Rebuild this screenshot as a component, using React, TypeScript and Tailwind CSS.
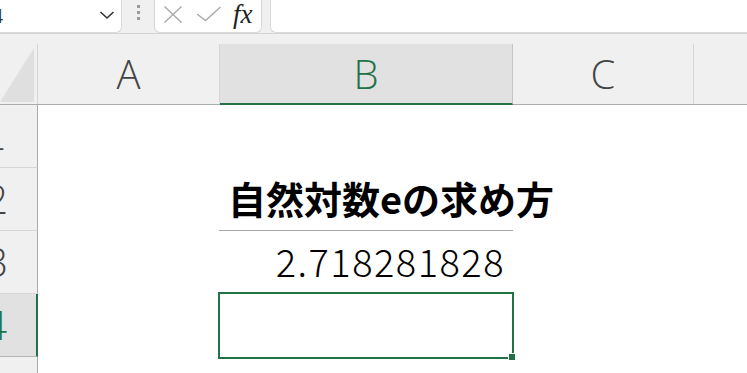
import React from "react";

const headerFont = { fontFamily: '"Open Sans", "Liberation Sans", sans-serif' };

function RowHeader({ n, active, font }: { n: number; active?: boolean; font?: React.CSSProperties }) {
  return (
    <div
      className={
        "h-[63px] w-[38px] shrink-0 flex items-center justify-end overflow-hidden border-b pr-[29px] " +
        (active
          ? "bg-[#e1e1e1] border-r-2 border-r-[#217346] border-b-[#b5b5b5] text-[#217346]"
          : "bg-[#f0f0f0] border-r border-r-[#ababab] border-b-[#d6d6d6] text-[#444]")
      }
    >
      <span className="text-[40px] font-light leading-none whitespace-nowrap" style={font ?? headerFont}>
        {n}
      </span>
    </div>
  );
}

export default function App() {
  return (
    <div
      className="w-[747px] h-[373px] overflow-hidden bg-white flex flex-col"
      style={{ fontFamily: '"Noto Sans CJK JP", "Noto Sans", sans-serif' }}
    >
      {/* Formula bar */}
      <div className="h-[33px] shrink-0 bg-[#f0f0f0] flex">
        <div className="w-[122px] shrink-0 bg-white rounded-br-[6px] border-r border-b border-[#d9d9d9] flex items-center justify-between overflow-hidden">
          <span
            className="-ml-[21px] text-[20px] text-[#333] leading-none"
            style={{ fontFamily: '"Liberation Sans", Arial, sans-serif' }}
          >
            B4
          </span>
          <svg width="16" height="10" viewBox="0 0 16 10" className="mr-[6px] mb-[3px]">
            <polyline points="1.5,2 8,8 14.5,2" fill="none" stroke="#333" strokeWidth="1.6" />
          </svg>
        </div>
        <div className="w-[32px] shrink-0 flex flex-col items-center gap-[3px] pt-[5px] pl-[1px]">
          <div className="w-[3px] h-[3px] bg-[#9a9a9a]" />
          <div className="w-[3px] h-[3px] bg-[#9a9a9a]" />
          <div className="w-[3px] h-[3px] bg-[#9a9a9a]" />
        </div>
        <div className="w-[108px] shrink-0 bg-white rounded-b-[6px] border-x border-b border-[#d9d9d9] flex items-center pl-[8px] pb-[3px]">
          <svg width="20" height="19" viewBox="0 0 20 19">
            <line x1="1.5" y1="1.5" x2="18.5" y2="17.5" stroke="#aaa" strokeWidth="1.4" />
            <line x1="18.5" y1="1.5" x2="1.5" y2="17.5" stroke="#aaa" strokeWidth="1.4" />
          </svg>
          <svg width="26" height="16" viewBox="0 0 26 16" className="ml-[13px] mt-[-2px]">
            <polyline points="1,8 9.5,14.5 24.5,1" fill="none" stroke="#aaa" strokeWidth="1.4" />
          </svg>
          <span
            className="ml-[11px] text-[27px] italic font-normal text-[#222] leading-none mt-[-1px]"
            style={{ fontFamily: '"Liberation Serif", "Times New Roman", serif' }}
          >
            fx
          </span>
        </div>
        <div className="w-[8px] shrink-0" />
        <div className="flex-1 bg-white rounded-bl-[6px] border-l border-b border-[#d9d9d9]" />
      </div>

      {/* Column headers */}
      <div className="h-[72px] shrink-0 bg-[#f0f0f0] border-t border-[#d4d4d4] pt-[10px] flex flex-col">
        <div className="flex-1 flex border-b border-[#ababab]" style={headerFont}>
          <div className="w-[38px] shrink-0 flex items-end pb-[2px] pt-[4px] border-r border-[#d6d6d6] relative">
            <svg width="34" height="54" viewBox="0 0 34 54" className="block">
              <polygon points="0,54 34,54 34,0" fill="#dfdfdf" />
            </svg>
          </div>
          <div className="w-[182px] shrink-0 border-r border-[#d6d6d6] flex items-center justify-center text-[40px] font-light text-[#444] leading-none">
            A
          </div>
          <div className="w-[293px] shrink-0 bg-[#e1e1e1] border-r border-[#c4c4c4] border-b-2 border-b-[#217346] -mb-[1px] flex items-center justify-center text-[40px] font-light text-[#217346] leading-none pt-[1px]">
            B
          </div>
          <div className="w-[181px] shrink-0 border-r border-[#d6d6d6] flex items-center justify-center text-[40px] font-light text-[#444] leading-none">
            C
          </div>
          <div className="flex-1" />
        </div>
      </div>

      {/* Grid body */}
      <div className="flex-1 flex">
        <div className="flex flex-col w-[38px] shrink-0 bg-[#f0f0f0]">
          <RowHeader n={1} font={{ fontFamily: '"DejaVu Sans", "Open Sans", sans-serif', fontWeight: 200 }} />
          <RowHeader n={2} />
          <RowHeader n={3} />
          <RowHeader n={4} active />
          <div className="flex-1 border-r border-[#ababab]" />
        </div>
        <div className="w-[181px] shrink-0" />
        <div className="w-[294px] shrink-0 flex flex-col">
          <div className="h-[63px]" />
          <div className="h-[63px] border-b border-[#a6a6a6] flex items-center pl-[9px] pb-[3px]">
            <span className="text-[38px] font-bold text-black whitespace-nowrap leading-none">
              自然対数eの求め方
            </span>
          </div>
          <div className="h-[63px] flex items-center justify-end pr-[8px] pb-[3px]">
            <span className="text-[38px] font-light text-black leading-none tracking-[1.5px]">
              2.718281828
            </span>
          </div>
          <div className="h-[63px] relative">
            <div className="absolute top-[-2px] bottom-[-2px] left-[-1px] right-[-1px] border-2 border-[#217346]" />
            <div className="absolute bottom-[-4px] right-[-3px] w-[8px] h-[8px] bg-[#217346] border border-white" />
          </div>
          <div className="flex-1" />
        </div>
        <div className="flex-1" />
      </div>
    </div>
  );
}
